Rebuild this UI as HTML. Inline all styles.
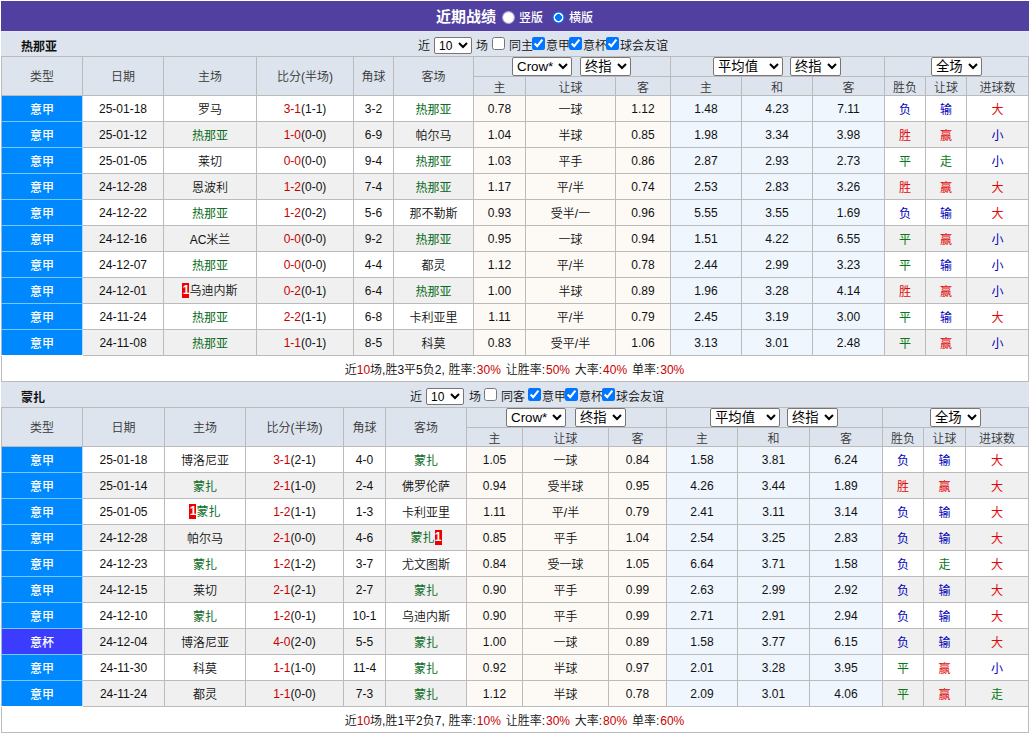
<!DOCTYPE html>
<html lang="zh-CN"><head><meta charset="utf-8"><title>近期战绩</title>
<style>
html,body{margin:0;padding:0;background:#fff;}
body{font-family:"Liberation Sans","Noto Sans CJK SC",sans-serif;font-size:12px;color:#111;font-weight:350;width:1032px;height:735px;overflow:hidden;position:relative;}
#wrap{position:absolute;left:1px;top:1px;width:1028px;}
.title{height:30px;background:#5240a0;border-bottom:1px solid #e6e6ff;color:#fff;position:relative;line-height:30px;}
.title b{position:absolute;left:435px;top:1px;font-size:15px;}
.title span{position:absolute;top:2px;font-weight:500;}
.title input{position:absolute;margin:0;top:10px;width:13px;height:13px;}
.title .r1{left:501px;-webkit-appearance:none;appearance:none;background:#fff;border-radius:50%;border:1px solid rgba(255,255,255,.55);background-clip:padding-box;box-sizing:border-box;}.title .r2{left:551px;-webkit-appearance:none;appearance:none;border:0;border-radius:50%;background:radial-gradient(circle at center,#0075ff 0,#0075ff 3.1px,#fff 3.7px,#fff 4.6px,#1468e4 5.2px,#1468e4 5.9px,rgba(20,104,228,0) 6.5px);}
.title span:nth-of-type(1){left:518px}.title span:nth-of-type(2){left:568px}
.bar{height:24px;background:#dde4ee;position:relative;}
.bar .tn{position:absolute;left:20px;top:0;line-height:31px;}
.flt{position:absolute;left:0;top:0;height:24px;width:100%;}
.flt span{position:absolute;top:7px;line-height:14px;white-space:nowrap;}
.flt input{position:absolute;margin:0;width:13px;height:13px;top:5px;}
.flt select{position:absolute;top:5px;width:38px;}
.b2 .flt{top:1px;}
select{font-family:"Liberation Sans","Noto Sans CJK SC",sans-serif;font-size:12px;height:17px;padding:0;margin:0;border:1px solid #767676;border-radius:2px;background-color:#fff;color:#000;vertical-align:middle;}
table{border-collapse:collapse;table-layout:fixed;width:1027px;margin:0;}
th,td{border:1px solid #bbb;padding:0;text-align:center;font-weight:350;overflow:hidden;white-space:nowrap;}
th{background:#dde4ee;height:18px;color:#363636;}
th[rowspan]{padding-bottom:2px;}
tr.h1 th{height:19px;}
.bar.b2{height:25px;}
td{height:25px;}
tr.odd td{background:#fff}
tr.even td{background:#f0f0f0}
tr td.oa{background:#fdfaf6}
tr td.ob{background:#eff6fd}
tr td.lg{background:#0088ff;color:#fff;font-weight:500;border-bottom-color:#78c8ff;border-right-color:#b0d8ff;border-left-color:#96b9dc;}
tr td.lg2{background:#3c3cff;color:#fff;font-weight:500;border-bottom-color:#78c8ff;border-right-color:#b0d8ff;border-left-color:#96b9dc;}
tr.last td.lg{border-bottom-color:#fff;}
.sc{color:#c80000}
.r{color:#e00808;font-weight:400}
.b{color:#0000b8;font-weight:400}
.g{color:#087818;font-weight:400}
.tm{color:#0a6c1c;font-weight:400}
.rc{background:#e00;color:#fff;font-weight:bold;display:inline-block;width:7px;height:15px;line-height:15px;vertical-align:middle;position:relative;top:-2px;text-align:center;}
tr.sum td{background:#fff;height:25px;}
.hs{position:relative;height:19px;}
.hs select{position:absolute;top:0;height:19px;font-size:13.333px;}
tr.sum td{word-spacing:.45px;}
.cl{letter-spacing:.9px;}
.pc{letter-spacing:1.05px;}
.b2 .tn{line-height:33px;}

</style></head>
<body>
<div id="wrap">
<div class="title"><b>近期战绩</b><input type="radio" name="v" class="r1"><span>竖版</span><input type="radio" name="v" class="r2" checked><span>横版</span></div>
<div class="bar"><b class="tn">热那亚</b><div class="flt"><span style="left:417px">近</span><select style="left:433px"><option>10</option></select><span style="left:475px">场</span><input type="checkbox" style="left:491px"><span style="left:508px">同主</span><input type="checkbox" checked style="left:531px"><span style="left:545px">意甲</span><input type="checkbox" checked style="left:568px"><span style="left:582px">意杯</span><input type="checkbox" checked style="left:605px"><span style="left:619px">球会友谊</span></div></div>
<table><colgroup><col style="width:81px"><col style="width:81px"><col style="width:93px"><col style="width:97px"><col style="width:40px"><col style="width:80px"><col style="width:52px"><col style="width:90px"><col style="width:55px"><col style="width:71px"><col style="width:71px"><col style="width:72px"><col style="width:41px"><col style="width:41px"><col style="width:62px"></colgroup>
<tr class="h1"><th rowspan="2">类型</th><th rowspan="2">日期</th><th rowspan="2">主场</th><th rowspan="2">比分(半场)</th><th rowspan="2">角球</th><th rowspan="2">客场</th><th colspan="3"><div class="hs"><select style="left:38px;width:60px"><option>Crow*</option></select><select style="left:106px;width:51px"><option>终指</option></select></div></th><th colspan="3"><div class="hs"><select style="left:42px;width:70px"><option>平均值</option></select><select style="left:119px;width:51px"><option>终指</option></select></div></th><th colspan="3"><div class="hs"><select style="left:46px;width:51px"><option>全场</option></select></div></th></tr>
<tr class="h2"><th>主</th><th>让球</th><th>客</th><th>主</th><th>和</th><th>客</th><th>胜负</th><th>让球</th><th>进球数</th></tr>
<tr class="odd"><td class="lg">意甲</td><td>25-01-18</td><td>罗马</td><td><span class="sc">3-1</span>(1-1)</td><td>3-2</td><td><span class="tm">热那亚</span></td><td class="oa">0.78</td><td class="oa">一球</td><td class="oa">1.12</td><td class="ob">1.48</td><td class="ob">4.23</td><td class="ob">7.11</td><td class="b">负</td><td class="b">输</td><td class="r">大</td></tr>
<tr class="even"><td class="lg">意甲</td><td>25-01-12</td><td><span class="tm">热那亚</span></td><td><span class="sc">1-0</span>(0-0)</td><td>6-9</td><td>帕尔马</td><td class="oa">1.04</td><td class="oa">半球</td><td class="oa">0.85</td><td class="ob">1.98</td><td class="ob">3.34</td><td class="ob">3.98</td><td class="r">胜</td><td class="r">赢</td><td class="b">小</td></tr>
<tr class="odd"><td class="lg">意甲</td><td>25-01-05</td><td>莱切</td><td><span class="sc">0-0</span>(0-0)</td><td>9-4</td><td><span class="tm">热那亚</span></td><td class="oa">1.03</td><td class="oa">平手</td><td class="oa">0.86</td><td class="ob">2.87</td><td class="ob">2.93</td><td class="ob">2.73</td><td class="g">平</td><td class="g">走</td><td class="b">小</td></tr>
<tr class="even"><td class="lg">意甲</td><td>24-12-28</td><td>恩波利</td><td><span class="sc">1-2</span>(0-0)</td><td>7-4</td><td><span class="tm">热那亚</span></td><td class="oa">1.17</td><td class="oa">平/半</td><td class="oa">0.74</td><td class="ob">2.53</td><td class="ob">2.83</td><td class="ob">3.26</td><td class="r">胜</td><td class="r">赢</td><td class="r">大</td></tr>
<tr class="odd"><td class="lg">意甲</td><td>24-12-22</td><td><span class="tm">热那亚</span></td><td><span class="sc">1-2</span>(0-2)</td><td>5-6</td><td>那不勒斯</td><td class="oa">0.93</td><td class="oa">受半/一</td><td class="oa">0.96</td><td class="ob">5.55</td><td class="ob">3.55</td><td class="ob">1.69</td><td class="b">负</td><td class="b">输</td><td class="r">大</td></tr>
<tr class="even"><td class="lg">意甲</td><td>24-12-16</td><td>AC米兰</td><td><span class="sc">0-0</span>(0-0)</td><td>9-2</td><td><span class="tm">热那亚</span></td><td class="oa">0.95</td><td class="oa">一球</td><td class="oa">0.94</td><td class="ob">1.51</td><td class="ob">4.22</td><td class="ob">6.55</td><td class="g">平</td><td class="r">赢</td><td class="b">小</td></tr>
<tr class="odd"><td class="lg">意甲</td><td>24-12-07</td><td><span class="tm">热那亚</span></td><td><span class="sc">0-0</span>(0-0)</td><td>4-4</td><td>都灵</td><td class="oa">1.12</td><td class="oa">平/半</td><td class="oa">0.78</td><td class="ob">2.44</td><td class="ob">2.99</td><td class="ob">3.23</td><td class="g">平</td><td class="b">输</td><td class="b">小</td></tr>
<tr class="even"><td class="lg">意甲</td><td>24-12-01</td><td><span class="rc">1</span>乌迪内斯</td><td><span class="sc">0-2</span>(0-1)</td><td>6-4</td><td><span class="tm">热那亚</span></td><td class="oa">1.00</td><td class="oa">半球</td><td class="oa">0.89</td><td class="ob">1.96</td><td class="ob">3.28</td><td class="ob">4.14</td><td class="r">胜</td><td class="r">赢</td><td class="b">小</td></tr>
<tr class="odd"><td class="lg">意甲</td><td>24-11-24</td><td><span class="tm">热那亚</span></td><td><span class="sc">2-2</span>(1-1)</td><td>6-8</td><td>卡利亚里</td><td class="oa">1.11</td><td class="oa">平/半</td><td class="oa">0.79</td><td class="ob">2.45</td><td class="ob">3.19</td><td class="ob">3.00</td><td class="g">平</td><td class="b">输</td><td class="r">大</td></tr>
<tr class="even last"><td class="lg">意甲</td><td>24-11-08</td><td><span class="tm">热那亚</span></td><td><span class="sc">1-1</span>(0-1)</td><td>8-5</td><td>科莫</td><td class="oa">0.83</td><td class="oa">受平/半</td><td class="oa">1.06</td><td class="ob">3.13</td><td class="ob">3.01</td><td class="ob">2.48</td><td class="g">平</td><td class="r">赢</td><td class="b">小</td></tr>
<tr class="sum"><td colspan="15">近<span class="sc">10</span>场,胜3平5负2, 胜率<span class="cl">:</span><span class="sc">30<span class="pc">%</span></span> 让胜率<span class="cl">:</span><span class="sc">50<span class="pc">%</span></span> 大率<span class="cl">:</span><span class="sc">40<span class="pc">%</span></span> 单率<span class="cl">:</span><span class="sc">30<span class="pc">%</span></span></td></tr>
</table>
<div class="bar b2"><b class="tn">蒙扎</b><div class="flt"><span style="left:409px">近</span><select style="left:425px"><option>10</option></select><span style="left:468px">场</span><input type="checkbox" style="left:483px"><span style="left:500px">同客</span><input type="checkbox" checked style="left:527px"><span style="left:541px">意甲</span><input type="checkbox" checked style="left:564px"><span style="left:578px">意杯</span><input type="checkbox" checked style="left:601px"><span style="left:615px">球会友谊</span></div></div>
<table><colgroup><col style="width:81px"><col style="width:82px"><col style="width:81px"><col style="width:98px"><col style="width:42px"><col style="width:81px"><col style="width:56px"><col style="width:86px"><col style="width:58px"><col style="width:71px"><col style="width:72px"><col style="width:73px"><col style="width:41px"><col style="width:42px"><col style="width:63px"></colgroup>
<tr class="h1"><th rowspan="2">类型</th><th rowspan="2">日期</th><th rowspan="2">主场</th><th rowspan="2">比分(半场)</th><th rowspan="2">角球</th><th rowspan="2">客场</th><th colspan="3"><div class="hs"><select style="left:39px;width:60px"><option>Crow*</option></select><select style="left:108px;width:51px"><option>终指</option></select></div></th><th colspan="3"><div class="hs"><select style="left:43px;width:70px"><option>平均值</option></select><select style="left:120px;width:51px"><option>终指</option></select></div></th><th colspan="3"><div class="hs"><select style="left:47px;width:51px"><option>全场</option></select></div></th></tr>
<tr class="h2"><th>主</th><th>让球</th><th>客</th><th>主</th><th>和</th><th>客</th><th>胜负</th><th>让球</th><th>进球数</th></tr>
<tr class="odd"><td class="lg">意甲</td><td>25-01-18</td><td>博洛尼亚</td><td><span class="sc">3-1</span>(2-1)</td><td>4-0</td><td><span class="tm">蒙扎</span></td><td class="oa">1.05</td><td class="oa">一球</td><td class="oa">0.84</td><td class="ob">1.58</td><td class="ob">3.81</td><td class="ob">6.24</td><td class="b">负</td><td class="b">输</td><td class="r">大</td></tr>
<tr class="even"><td class="lg">意甲</td><td>25-01-14</td><td><span class="tm">蒙扎</span></td><td><span class="sc">2-1</span>(1-0)</td><td>2-4</td><td>佛罗伦萨</td><td class="oa">0.94</td><td class="oa">受半球</td><td class="oa">0.95</td><td class="ob">4.26</td><td class="ob">3.44</td><td class="ob">1.89</td><td class="r">胜</td><td class="r">赢</td><td class="r">大</td></tr>
<tr class="odd"><td class="lg">意甲</td><td>25-01-05</td><td><span class="rc">1</span><span class="tm">蒙扎</span></td><td><span class="sc">1-2</span>(1-1)</td><td>1-3</td><td>卡利亚里</td><td class="oa">1.11</td><td class="oa">平/半</td><td class="oa">0.79</td><td class="ob">2.41</td><td class="ob">3.11</td><td class="ob">3.14</td><td class="b">负</td><td class="b">输</td><td class="r">大</td></tr>
<tr class="even"><td class="lg">意甲</td><td>24-12-28</td><td>帕尔马</td><td><span class="sc">2-1</span>(0-0)</td><td>4-6</td><td><span class="tm">蒙扎</span><span class="rc">1</span></td><td class="oa">0.85</td><td class="oa">平手</td><td class="oa">1.04</td><td class="ob">2.54</td><td class="ob">3.25</td><td class="ob">2.83</td><td class="b">负</td><td class="b">输</td><td class="r">大</td></tr>
<tr class="odd"><td class="lg">意甲</td><td>24-12-23</td><td><span class="tm">蒙扎</span></td><td><span class="sc">1-2</span>(1-2)</td><td>3-7</td><td>尤文图斯</td><td class="oa">0.84</td><td class="oa">受一球</td><td class="oa">1.05</td><td class="ob">6.64</td><td class="ob">3.71</td><td class="ob">1.58</td><td class="b">负</td><td class="g">走</td><td class="r">大</td></tr>
<tr class="even"><td class="lg">意甲</td><td>24-12-15</td><td>莱切</td><td><span class="sc">2-1</span>(2-1)</td><td>2-7</td><td><span class="tm">蒙扎</span></td><td class="oa">0.90</td><td class="oa">平手</td><td class="oa">0.99</td><td class="ob">2.63</td><td class="ob">2.99</td><td class="ob">2.92</td><td class="b">负</td><td class="b">输</td><td class="r">大</td></tr>
<tr class="odd"><td class="lg">意甲</td><td>24-12-10</td><td><span class="tm">蒙扎</span></td><td><span class="sc">1-2</span>(0-1)</td><td>10-1</td><td>乌迪内斯</td><td class="oa">0.90</td><td class="oa">平手</td><td class="oa">0.99</td><td class="ob">2.71</td><td class="ob">2.91</td><td class="ob">2.94</td><td class="b">负</td><td class="b">输</td><td class="r">大</td></tr>
<tr class="even"><td class="lg2">意杯</td><td>24-12-04</td><td>博洛尼亚</td><td><span class="sc">4-0</span>(2-0)</td><td>5-5</td><td><span class="tm">蒙扎</span></td><td class="oa">1.00</td><td class="oa">一球</td><td class="oa">0.89</td><td class="ob">1.58</td><td class="ob">3.77</td><td class="ob">6.15</td><td class="b">负</td><td class="b">输</td><td class="r">大</td></tr>
<tr class="odd"><td class="lg">意甲</td><td>24-11-30</td><td>科莫</td><td><span class="sc">1-1</span>(1-0)</td><td>11-4</td><td><span class="tm">蒙扎</span></td><td class="oa">0.92</td><td class="oa">半球</td><td class="oa">0.97</td><td class="ob">2.01</td><td class="ob">3.28</td><td class="ob">3.95</td><td class="g">平</td><td class="r">赢</td><td class="b">小</td></tr>
<tr class="even last"><td class="lg">意甲</td><td>24-11-24</td><td>都灵</td><td><span class="sc">1-1</span>(0-0)</td><td>7-3</td><td><span class="tm">蒙扎</span></td><td class="oa">1.12</td><td class="oa">半球</td><td class="oa">0.78</td><td class="ob">2.09</td><td class="ob">3.01</td><td class="ob">4.06</td><td class="g">平</td><td class="r">赢</td><td class="g">走</td></tr>
<tr class="sum"><td colspan="15">近<span class="sc">10</span>场,胜1平2负7, 胜率<span class="cl">:</span><span class="sc">10<span class="pc">%</span></span> 让胜率<span class="cl">:</span><span class="sc">30<span class="pc">%</span></span> 大率<span class="cl">:</span><span class="sc">80<span class="pc">%</span></span> 单率<span class="cl">:</span><span class="sc">60<span class="pc">%</span></span></td></tr>
</table>
</div>
</body></html>
